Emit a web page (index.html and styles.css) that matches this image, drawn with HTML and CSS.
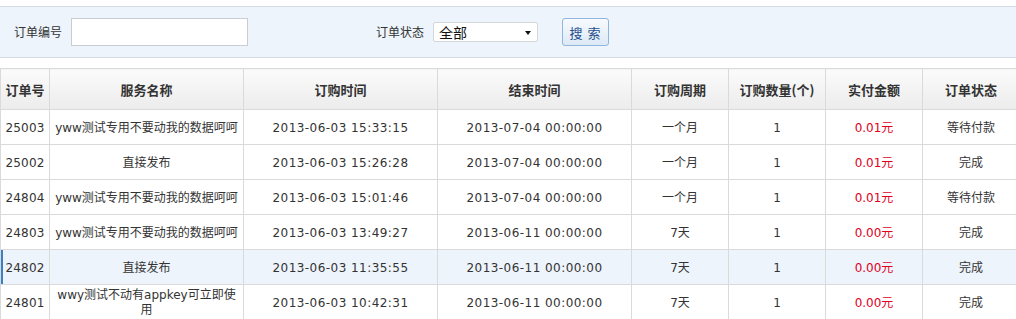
FILE: index.html
```html
<!DOCTYPE html>
<html lang="zh-CN">
<head>
<meta charset="utf-8">
<title>订单列表</title>
<link rel="stylesheet" href="styles.css">
</head>
<body>
<div class="search-panel">
  <label class="search-label" for="orderNo">订单编号</label>
  <input class="search-input" id="orderNo" type="text">
  <label class="search-label status-label" for="orderStatus">订单状态</label>
  <div class="select-wrap">
    <select class="status-select" id="orderStatus">
      <option>全部</option>
      <option>等待付款</option>
      <option>完成</option>
    </select>
  </div>
  <button class="search-btn" type="button">搜 索</button>
</div>

<table class="order-table">
  <colgroup>
    <col class="c-id"><col class="c-wide"><col class="c-wide"><col class="c-wide">
    <col class="c-narrow"><col class="c-narrow"><col class="c-narrow"><col class="c-narrow">
  </colgroup>
  <thead>
    <tr>
      <th>订单号</th><th>服务名称</th><th>订购时间</th><th>结束时间</th>
      <th>订购周期</th><th>订购数量(个)</th><th>实付金额</th><th>订单状态</th>
    </tr>
  </thead>
  <tbody>
    <tr>
      <td class="num">25003</td><td>yww测试专用不要动我的数据呵呵</td><td class="time">2013-06-03 15:33:15</td><td class="time">2013-07-04 00:00:00</td>
      <td>一个月</td><td>1</td><td class="price">0.01元</td><td>等待付款</td>
    </tr>
    <tr>
      <td class="num">25002</td><td>直接发布</td><td class="time">2013-06-03 15:26:28</td><td class="time">2013-07-04 00:00:00</td>
      <td>一个月</td><td>1</td><td class="price">0.01元</td><td>完成</td>
    </tr>
    <tr>
      <td class="num">24804</td><td>yww测试专用不要动我的数据呵呵</td><td class="time">2013-06-03 15:01:46</td><td class="time">2013-07-04 00:00:00</td>
      <td>一个月</td><td>1</td><td class="price">0.01元</td><td>等待付款</td>
    </tr>
    <tr>
      <td class="num">24803</td><td>yww测试专用不要动我的数据呵呵</td><td class="time">2013-06-03 13:49:27</td><td class="time">2013-06-11 00:00:00</td>
      <td>7天</td><td>1</td><td class="price">0.00元</td><td>完成</td>
    </tr>
    <tr class="is-active">
      <td class="num">24802</td><td>直接发布</td><td class="time">2013-06-03 11:35:55</td><td class="time">2013-06-11 00:00:00</td>
      <td>7天</td><td>1</td><td class="price">0.00元</td><td>完成</td>
    </tr>
    <tr>
      <td class="num">24801</td><td>wwy测试不动有appkey可立即使用</td><td class="time">2013-06-03 10:42:31</td><td class="time">2013-06-11 00:00:00</td>
      <td>7天</td><td>1</td><td class="price">0.00元</td><td>完成</td>
    </tr>
  </tbody>
</table>
</body>
</html>
```

FILE: styles.css
```css
html, body {
  margin: 0;
  padding: 0;
  background: #fff;
  overflow: hidden;
}

body {
  width: 1016px;
  font-family: "DejaVu Sans", "Noto Sans CJK SC", sans-serif;
  font-size: 12px;
  color: #333;
}

.search-panel {
  margin-top: 6px;
  width: 1030px;
  height: 50px;
  box-sizing: content-box;
  background: #edf4fb;
  border-top: 1px solid #d5dae0;
  border-bottom: 1px solid #d5dae0;
  display: flex;
  align-items: center;
  padding-left: 14px;
}

.search-label {
  font-family: "Noto Sans CJK SC", sans-serif;
  font-size: 12px;
  color: #333;
  margin-right: 9px;
  line-height: 16px;
}

.status-label {
  margin-left: 128px;
}

.search-input {
  width: 177px;
  height: 28px;
  box-sizing: border-box;
  border: 1px solid #c9cdd1;
  background: #fff;
  margin: 0;
  padding: 0 4px;
  outline: none;
}

.select-wrap {
  position: relative;
  width: 105px;
  height: 20px;
  margin-top: -1px;
}

.select-wrap::after {
  content: "";
  position: absolute;
  right: 7px;
  top: 9px;
  border-left: 3.5px solid transparent;
  border-right: 3.5px solid transparent;
  border-top: 4px solid #111;
  pointer-events: none;
}

.status-select {
  appearance: none;
  -webkit-appearance: none;
  width: 105px;
  height: 20px;
  box-sizing: border-box;
  border: 1px solid #d3d6da;
  border-radius: 2px;
  background: #fff;
  margin: 0;
  padding: 0 0 0 5px;
  font-family: "Noto Sans CJK SC", sans-serif;
  font-size: 14px;
  color: #111;
  line-height: 18px;
  outline: none;
}

.search-btn {
  margin-left: 24px;
  width: 47px;
  height: 28px;
  box-sizing: border-box;
  border: 1px solid #8fb6df;
  border-radius: 3px;
  background: linear-gradient(#f7fafd, #dde9f6);
  color: #24508c;
  font-family: "Noto Sans CJK SC", sans-serif;
  font-size: 13px;
  padding: 0;
  white-space: pre;
  letter-spacing: 1px;
}

.order-table {
  margin-top: 10px;
  width: 1020px;
  table-layout: fixed;
  border-collapse: collapse;
  border: 1px solid #dadada;
}

.c-id { width: 49px; }
.c-wide { width: 194px; }
.c-narrow { width: 97px; }

.order-table th,
.order-table td {
  border: 1px solid #dadada;
  text-align: center;
  vertical-align: middle;
  padding: 0 3px;
  overflow: hidden;
}

.order-table th {
  height: 40px;
  background: linear-gradient(#fbfbfb, #ececec);
  font-family: "Noto Sans CJK SC", sans-serif;
  font-size: 13px;
  font-weight: bold;
  color: #333;
  padding: 0;
}

.order-table td {
  height: 32px;
  line-height: 15px;
  font-size: 12px;
  padding-top: 2px;
  padding-bottom: 0;
}

.order-table td.time {
  letter-spacing: 0.45px;
}

.order-table td.num {
  letter-spacing: 0.2px;
  padding-left: 1px;
  padding-right: 1px;
}

.order-table td.price {
  color: #e0001b;
}

.order-table tr.is-active td {
  background: #eef4fb;
}

.order-table tr.is-active td:first-child {
  box-shadow: inset 2px 0 0 #3b7fc4;
}
```
